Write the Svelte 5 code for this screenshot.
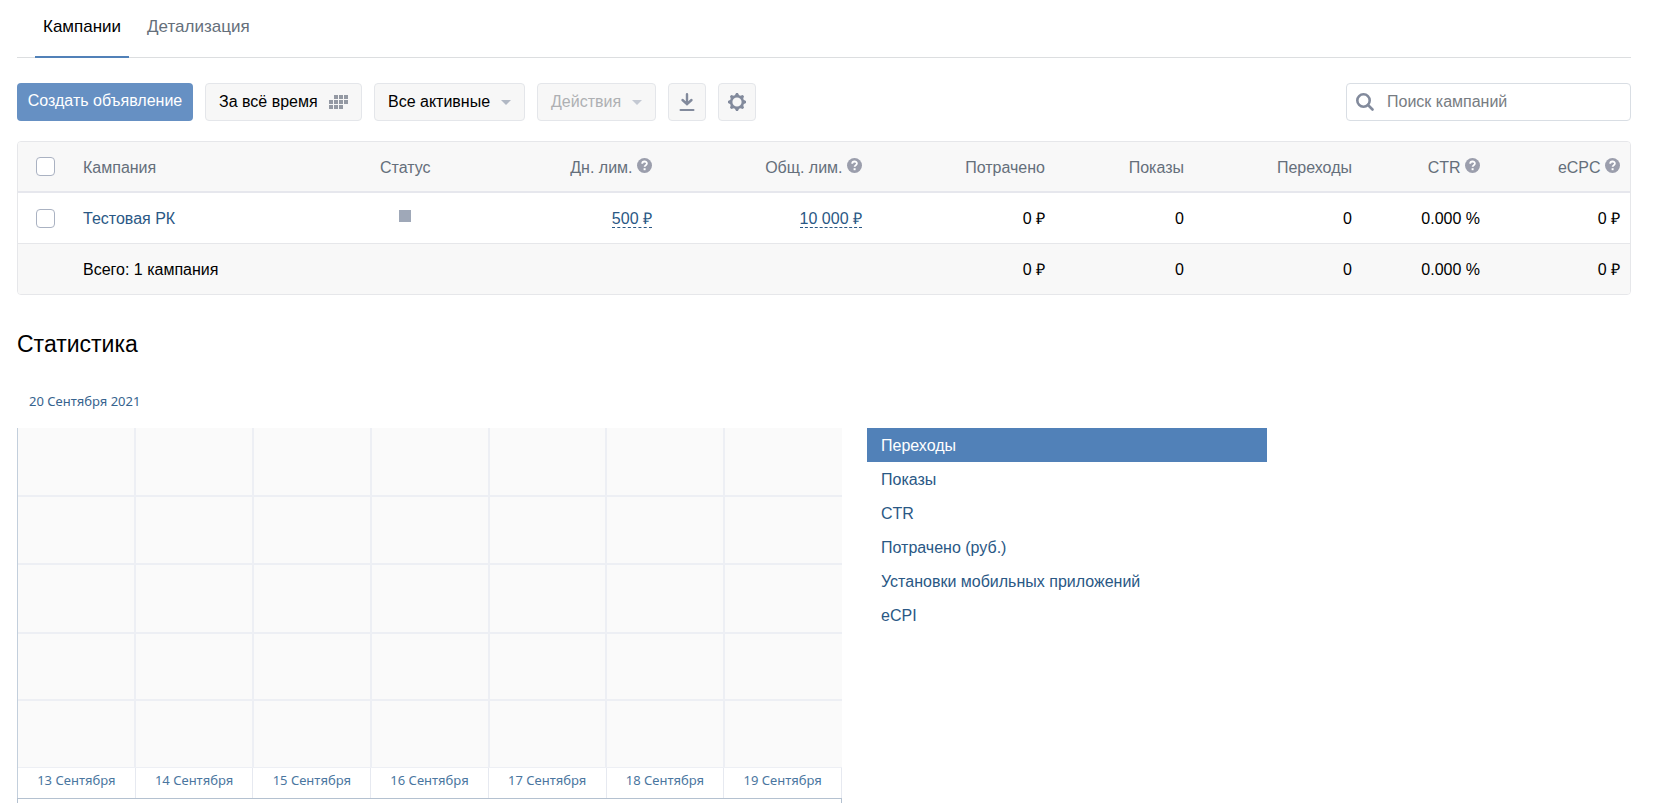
<style>
  :global(body) {
    background: #fff;
    color: #000;
    font: 16px/20px "Liberation Sans", Arial, sans-serif;
  }
  .page {
    height: 100vh;
    padding: 0 28px 0 17px;
    box-sizing: border-box;
    overflow: hidden;
  }
  a {
    color: #2a5885;
    text-decoration: none;
  }
  button,
  input {
    font: inherit;
    box-sizing: border-box;
    margin: 0;
  }
  svg {
    display: block;
  }

  .tabs {
    display: flex;
    height: 58px;
    padding: 0 18px;
    box-sizing: border-box;
    border-bottom: 1px solid #dcdee0;
    font-size: 17px;
  }
  .tabs a {
    height: 58px;
    padding: 17px 8px 0;
    margin-right: 10px;
    box-sizing: border-box;
    color: #656f7b;
  }
  .tabs a.active {
    border-bottom: 2px solid #5181b8;
    color: #000;
  }

  .toolbar {
    display: flex;
    gap: 12px;
    margin: 25px 0 20px;
  }
  .btn {
    display: flex;
    align-items: center;
    justify-content: space-between;
    height: 38px;
    padding: 0 13px;
    border: 1px solid #e4e6ea;
    border-radius: 4px;
    background: #f7f7f7;
    color: #000;
    white-space: nowrap;
  }
  .btn.primary {
    width: 176px;
    justify-content: center;
    padding: 0 0 2px;
    border: 0;
    background: #6690c3;
    color: #fff;
  }
  .btn.period {
    width: 157px;
  }
  .btn.filter {
    width: 151px;
  }
  .btn.actions {
    width: 119px;
  }
  .btn.square {
    width: 38px;
    padding: 0;
    justify-content: center;
  }
  .btn:disabled {
    color: #aeb0b3;
  }
  .search {
    display: flex;
    align-items: center;
    gap: 13px;
    width: 285px;
    height: 38px;
    margin-left: auto;
    padding: 0 9px;
    box-sizing: border-box;
    border: 1px solid #d9dee4;
    border-radius: 4px;
  }
  .search input {
    flex: 1;
    min-width: 0;
    padding: 0;
    border: 0;
    outline: 0;
    background: none;
  }
  .search input::placeholder {
    color: #777c82;
    opacity: 1;
  }

  .campaigns {
    border: 1px solid #e6e7ea;
    border-radius: 4px;
    overflow: hidden;
  }
  table {
    width: 100%;
    border-collapse: separate;
    border-spacing: 0;
    table-layout: fixed;
  }
  th,
  td {
    height: 50px;
    padding: 2px 10px 0;
    box-sizing: border-box;
    font-weight: normal;
    text-align: right;
    white-space: nowrap;
  }
  th {
    height: 51px;
    border-bottom: 2px solid #e6e7ed;
    background: #f8f8f8;
    color: #656f7b;
  }
  tfoot td {
    height: 51px;
    border-top: 1px solid #e6e7ea;
    background: #f8f8f8;
  }
  .left {
    text-align: left;
  }
  .center {
    text-align: center;
  }
  .col-check {
    width: 55px;
  }
  .col-status {
    width: 70px;
  }
  .check {
    padding: 0 0 0 18px;
  }
  .check input {
    display: block;
    appearance: none;
    width: 19px;
    height: 19px;
    border: 1px solid #aab2c2;
    border-radius: 4px;
    background: #fff;
  }
  .help {
    display: inline-block;
    vertical-align: 0;
  }
  .status {
    display: block;
    width: 12px;
    height: 12px;
    margin: 0 auto 6px;
    background: #9fa8b8;
  }
  .limit {
    border-bottom: 1px dashed #2a5885;
  }

  h2 {
    margin: 35px 0 0;
    font-size: 23px;
    line-height: 28px;
    font-weight: normal;
  }
  .stats {
    display: flex;
    align-items: flex-start;
    gap: 25px;
  }
  .chart {
    width: 825px;
    color: #36638e;
    font: 13px/16px "Noto Sans", Tahoma, sans-serif;
  }
  .date {
    padding: 35px 12px 19px;
  }
  .days {
    display: grid;
    grid-template-columns: repeat(7, 1fr);
    height: 30px;
    box-sizing: border-box;
    border-left: 1px solid #c3cfdc;
    color: #4a76a0;
  }
  .days span {
    padding-top: 4px;
    border-right: 1px solid #e6e9f0;
    text-align: center;
  }
  .overview {
    height: 50px;
    box-sizing: border-box;
    border: 1px solid #b4c1d0;
  }
  .metrics {
    width: 400px;
    margin: 70px 0 0;
    padding: 0;
    list-style: none;
  }
  .metrics a {
    display: block;
    padding: 8px 14px 6px;
  }
  .metrics a.active {
    background: #5181b8;
    color: #fff;
  }
</style>

<script>
  const columns = [
    { title: 'Дн. лим.', help: true, width: 222 },
    { title: 'Общ. лим.', help: true, width: 210 },
    { title: 'Потрачено', width: 183 },
    { title: 'Показы', width: 139 },
    { title: 'Переходы', width: 168 },
    { title: 'CTR', help: true, width: 128 },
    { title: 'eCPC', help: true, width: 140 },
  ]
  const totals = ['0 ₽', '0', '0', '0.000 %', '0 ₽']
  const days = [13, 14, 15, 16, 17, 18, 19]
  const metrics = ['Переходы', 'Показы', 'CTR', 'Потрачено (руб.)', 'Установки мобильных приложений', 'eCPI']

  let metric = 'Переходы'
  let query = ''
  let selected = false
</script>

<div class="page">
  <nav class="tabs">
    <a class="active" href="#campaigns">Кампании</a>
    <a href="#details">Детализация</a>
  </nav>

  <div class="toolbar">
    <button class="btn primary">Создать объявление</button>
    <button class="btn period">
      За всё время
      <svg width="19" height="14" fill="#9499a3">
        {#each [0, 1, 2] as row}
          {#each [0, 1, 2, 3] as col}
            {#if row !== 2 || col < 3}
              {#if row !== 0 || col > 0}
                <rect x={col * 5} y={row * 5} width="4" height="4" />
              {/if}
            {/if}
          {/each}
        {/each}
      </svg>
    </button>
    <button class="btn filter">
      Все активные
      <svg width="10" height="5" fill="#b1b8c4"><path d="M0 0h10L5 5z" /></svg>
    </button>
    <button class="btn actions" disabled>
      Действия
      <svg width="10" height="5" fill="#c4c9d3"><path d="M0 0h10L5 5z" /></svg>
    </button>
    <button class="btn square" aria-label="Скачать">
      <svg width="16" height="18" fill="none" stroke="#828a9c" stroke-width="2.4" stroke-linecap="round">
        <path d="M8 1.200v9M3.500 7L8 11.200 12.500 7" />
        <path d="M1.500 17h13" stroke-width="2" />
      </svg>
    </button>
    <button class="btn square" aria-label="Настройки">
      <svg width="18" height="18" viewBox="-9 -9 18 18" fill="none" stroke="#828a9c">
        <circle r="5.8" stroke-width="2.4" />
        {#each [0, 45, 90, 135, 180, 225, 270, 315] as angle}
          <path d="M-2.500-6L-.9-9H.9L2.500-6z" fill="#828a9c" stroke="none" transform="rotate({angle})" />
        {/each}
      </svg>
    </button>
    <label class="search">
      <svg width="18" height="18" fill="none" stroke="#828a9c" stroke-width="2.6">
        <circle cx="7.5" cy="7.5" r="6.2" />
        <path d="M12 12l4.5 4.5" stroke-linecap="round" />
      </svg>
      <input type="text" placeholder="Поиск кампаний" aria-label="Поиск кампаний" bind:value={query} />
    </label>
  </div>

  <div class="campaigns">
    <table>
      <colgroup>
        <col class="col-check" />
        <col />
        <col class="col-status" />
        {#each columns as column}
          <col style="width: {column.width}px" />
        {/each}
      </colgroup>
      <thead>
        <tr>
          <th class="check"><input type="checkbox" aria-label="Выбрать все" bind:checked={selected} /></th>
          <th class="left">Кампания</th>
          <th class="center">Статус</th>
          {#each columns as column}
            <th>
              {column.title}
              {#if column.help}
                <svg class="help" width="15" height="15" viewBox="0 0 15 15">
                  <circle cx="7.5" cy="7.5" r="7.5" fill="#9b9eac" />
                  <path d="M5.2 5.8c0-3 4.7-3 4.7-.3 0 1.7-2.3 1.6-2.3 3.3" fill="none" stroke="#fff" stroke-width="1.8" />
                  <rect x="6.6" y="10.2" width="2" height="2" fill="#fff" />
                </svg>
              {/if}
            </th>
          {/each}
        </tr>
      </thead>
      <tbody>
        <tr>
          <td class="check"><input type="checkbox" aria-label="Тестовая РК" bind:checked={selected} /></td>
          <td class="left"><a href="#campaign">Тестовая РК</a></td>
          <td><span class="status"></span></td>
          <td><a class="limit" href="#day-limit">500 ₽</a></td>
          <td><a class="limit" href="#all-limit">10 000 ₽</a></td>
          {#each totals as value}
            <td>{value}</td>
          {/each}
        </tr>
      </tbody>
      <tfoot>
        <tr>
          <td></td>
          <td class="left" colspan="4">Всего: 1 кампания</td>
          {#each totals as value}
            <td>{value}</td>
          {/each}
        </tr>
      </tfoot>
    </table>
  </div>

  <h2>Статистика</h2>
  <div class="stats">
    <div class="chart">
      <div class="date">20 Сентября 2021</div>
      <svg width="825" height="340">
        <rect width="825" height="340" fill="#fafafa" />
        <g fill="#edeff4">
          {#each [117, 235, 353, 471, 588, 706] as x}
            <rect {x} width="2" height="340" />
          {/each}
          {#each [67, 135, 204, 271] as y}
            <rect {y} width="825" height="2" />
          {/each}
          <rect y="339" width="825" height="1" />
        </g>
        <rect width="1" height="340" fill="#c3cfdc" />
      </svg>
      <div class="days">
        {#each days as day}
          <span>{day} Сентября</span>
        {/each}
      </div>
      <div class="overview"></div>
    </div>
    <ul class="metrics">
      {#each metrics as name}
        <li>
          <a href="#stats" class:active={name === metric} on:click|preventDefault={() => (metric = name)}>{name}</a>
        </li>
      {/each}
    </ul>
  </div>
</div>
